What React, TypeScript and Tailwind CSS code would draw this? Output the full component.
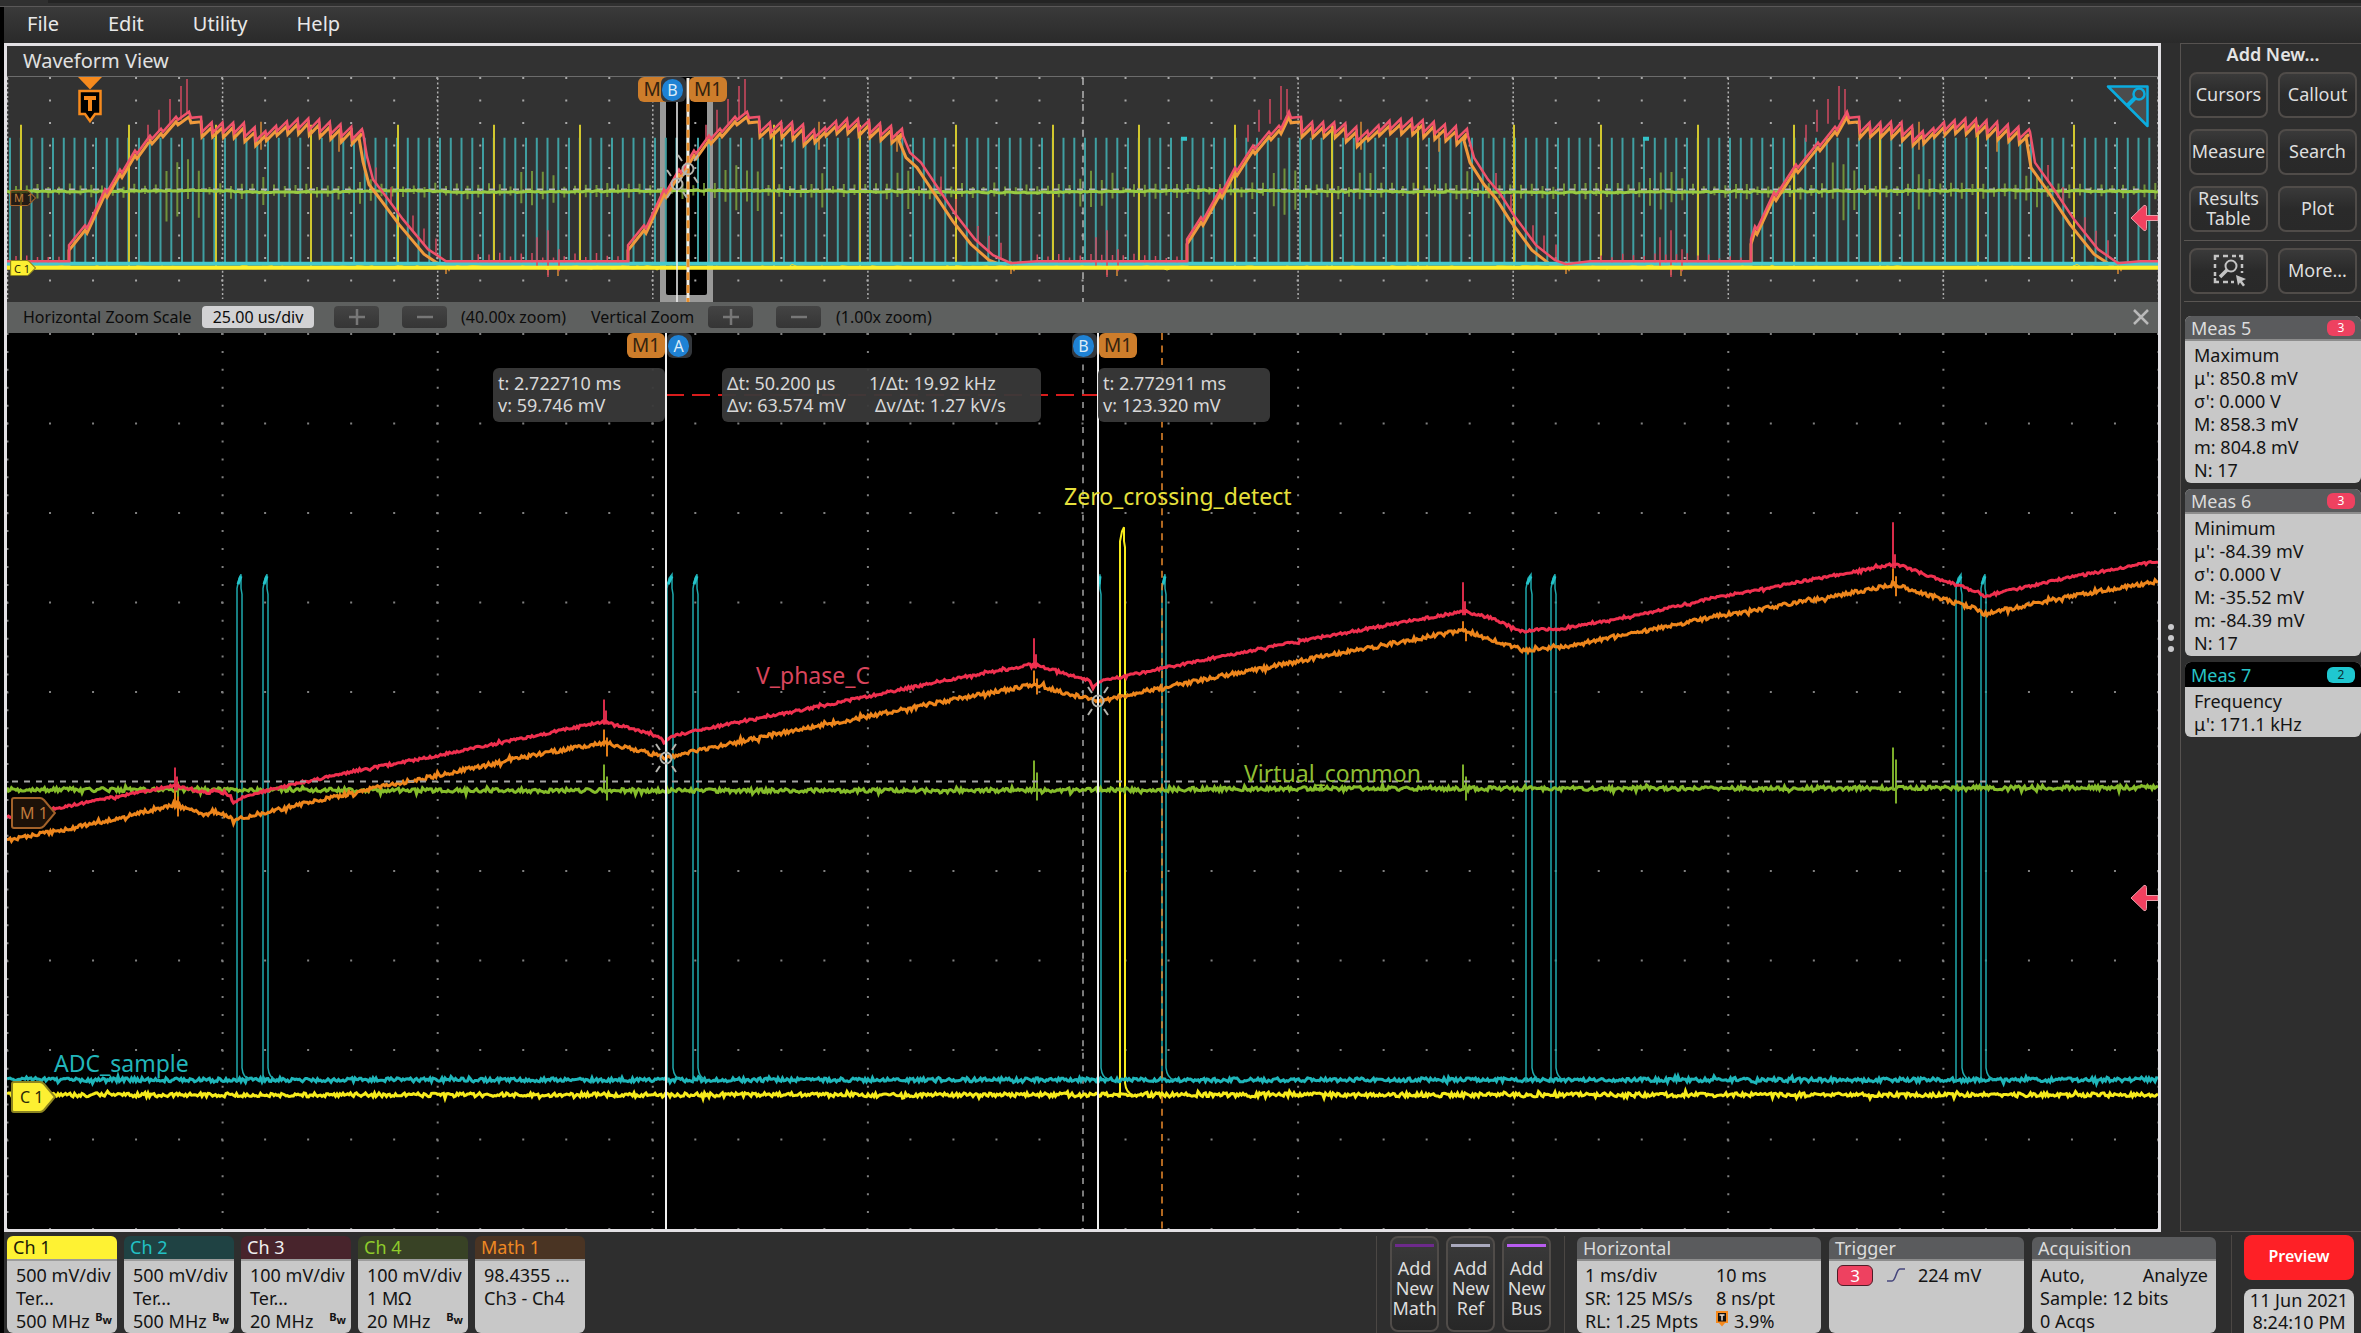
import React from "react";

type Pt = [number, number];

const OV = { x: 7, y: 77, w: 2151, h: 226 };
const DT = { x: 7, y: 333, w: 2151, h: 895 };

function makeRandom(seed: number) {
  let s = seed;
  return () => {
    s = (s * 1664525 + 1013904223) % 4294967296;
    return s / 4294967296;
  };
}

const toPath = (pts: Pt[]) => "M" + pts.map(([x, y]) => `${x.toFixed(1)} ${y.toFixed(1)}`).join("L");

function valueAt(pts: Pt[], x: number) {
  for (let i = 1; i < pts.length; i++) {
    if (x <= pts[i][0]) {
      const [x0, y0] = pts[i - 1];
      const [x1, y1] = pts[i];
      return x1 === x0 ? y1 : y0 + ((y1 - y0) * (x - x0)) / (x1 - x0);
    }
  }
  return pts[pts.length - 1][1];
}

function noisy(pts: Pt[], amp: number, seed: number, step = 1.5) {
  const rnd = makeRandom(seed);
  const out: Pt[] = [];
  for (let x = pts[0][0]; x <= pts[pts.length - 1][0]; x += step) {
    const r = rnd() - 0.5;
    const peak = rnd() > 0.94 ? 2 : 1;
    out.push([x, valueAt(pts, x) + r * amp * peak]);
  }
  return toPath(out);
}

/* ---------- detail traces ---------- */

const RED: Pt[] = [
  [7, 817], [55, 808], [174, 785], [185, 787], [209, 793], [213, 789], [231, 795], [233, 804], [239, 798], [266, 790], [348, 772],
  [438, 755], [527, 737], [605, 721], [662, 737], [664, 743], [669, 737], [696, 730], [780, 714], [950, 679],
  [1034, 664], [1090, 680], [1093, 688], [1097, 682], [1162, 668], [1298, 641], [1414, 620], [1464, 611],
  [1492, 618], [1524, 632], [1535, 629], [1561, 629], [1650, 612], [1716, 597], [1771, 587], [1860, 570],
  [1893, 564], [1902, 566], [1936, 578], [1977, 591], [1984, 596], [2070, 577], [2158, 561],
];
const ORANGE: Pt[] = [
  [7, 840], [100, 822], [174, 804], [185, 808], [209, 815], [212, 810], [231, 817], [234, 822], [239, 818], [348, 793],
  [438, 775], [527, 756], [605, 742], [666, 757], [696, 750], [780, 733], [950, 700], [1034, 684], [1097, 701],
  [1162, 687], [1298, 661], [1414, 639], [1464, 630], [1524, 650], [1535, 648], [1561, 647], [1650, 630],
  [1716, 616], [1771, 607], [1860, 591], [1893, 584], [1977, 609], [1983, 614], [2070, 596], [2158, 581],
];
const GREEN: Pt[] = [[7, 789], [600, 790], [1000, 790], [1300, 788], [1640, 788], [2158, 787]];

const EDGE_SPIKES = [
  { x: 175, r: [767, 790], o: [788, 816], g: [769, 798] },
  { x: 604, r: [699, 724], o: [729, 756], g: [764, 800] },
  { x: 1034, r: [638, 668], o: [670, 694], g: [760, 800] },
  { x: 1463, r: [582, 615], o: [621, 641], g: [764, 800] },
  { x: 1893, r: [522, 568], o: [568, 596], g: [747, 803] },
];

const CYAN_PULSES: Pt[] = [
  [237, 242], [263, 268], [667, 673], [693, 698], [1098, 1101], [1162, 1166],
  [1526, 1532], [1551, 1556], [1956, 1962], [1981, 1986],
];

const pulsePath = (a: number, b: number, top: number, base: number) =>
  `M${a} ${base + 3}V${top + 14}L${a + 2} ${top + 4}L${b - 1} ${top}V${top + 14}L${b} ${top + 20}V${base - 12}Q${b + 1} ${base - 2} ${b + 8} ${base}`;

/* ---------- overview traces ---------- */

interface Cycle {
  start: number;
  peak: number;
  end: number;
  floor: number;
  rise: Pt[];
  fall: Pt[];
}

const RISE: Pt[] = [[0, 246], [16, 226], [36, 190], [51, 170], [66, 151], [81, 136], [92, 129], [107, 117]];

const CYCLES: Cycle[] = [
  { start: 69, peak: 189, end: 363, floor: 446, rise: RISE, fall: [[363, 133], [367, 157], [373, 180], [383, 193], [403, 220], [428, 250], [446, 262]] },
  { start: 628, peak: 747, end: 903, floor: 1011, rise: RISE, fall: [[903, 136], [910, 153], [921, 163], [939, 190], [957, 217], [975, 240], [993, 256], [1011, 264], [1037, 262]] },
  { start: 1187, peak: 1289, end: 1468, floor: 1566, rise: [[0, 240], [14, 218], [33, 190], [48, 168], [66, 146], [82, 132], [92, 126]], fall: [[1468, 136], [1474, 158], [1488, 180], [1500, 194], [1514, 216], [1536, 246], [1555, 261], [1566, 265], [1590, 262]] },
  { start: 1751, peak: 1847, end: 2030, floor: 2118, rise: [[0, 240], [4, 227], [23, 193], [45, 165], [67, 143], [84, 127]], fall: [[2030, 132], [2035, 163], [2052, 187], [2074, 220], [2098, 250], [2118, 264], [2140, 262]] },
];

function overviewTrace(dy: number, dx: number, seed: number): string {
  const rnd = makeRandom(seed);
  const pts: Pt[] = [[7, 262 + dy]];
  for (const c of CYCLES) {
    pts.push([c.start, 262 + dy]);
    c.rise.forEach(([x, y], i) => {
      pts.push([c.start + x, y + dy]);
      if (i > 0 && i < c.rise.length) pts.push([c.start + x + 2, y + dy + 3]);
    });
    pts.push([c.peak, 112 + dy], [c.peak + 2, 118 + dy], [c.peak + 12, 117 + dy]);
    const from = c.peak + 13;
    const count = Math.round((c.end - from) / 10.75);
    const w = (c.end - from) / count;
    for (let i = 0; i < count; i++) {
      const t = i / count;
      const mid = 127 + 9 * Math.exp(-Math.pow((t - 0.33) / 0.08, 2)) - 4 * Math.exp(-Math.pow((t - 0.6) / 0.16, 2)) + 10 * Math.pow(t, 6);
      pts.push([from + i * w, mid + 5 + dy + rnd()], [from + (i + 1) * w - 1, mid - 5 + dy + rnd()]);
    }
    c.fall.forEach(([x, y]) => pts.push([x - dx, Math.min(y + dy, 268)]));
  }
  pts.push([2158, 262 + dy]);
  return toPath(pts);
}

const RED_OVERVIEW = overviewTrace(0, 0, 3);
const ORANGE_OVERVIEW = overviewTrace(5, 4, 5);

const PULSE_STEP = 10.75;
const PULSES = Array.from({ length: 200 }, (_, i) => 10 + i * PULSE_STEP);
const YELLOW_PULSES = [21, 129, 216, 311, 398, 494, 580, 774, 860, 956, 1053, 1139, 1235, 1332, 1418, 1514, 1601, 1698, 1794, 1880, 1978, 2074];

const GREEN_SPIKES = (() => {
  const rnd = makeRandom(11);
  return PULSES.map((p) => {
    const x = p + 6;
    const near = CYCLES.some((c) => Math.abs(x - c.peak + 4) < 20);
    const mid = CYCLES.some((c) => Math.abs(x - c.peak - 76) < 9 || Math.abs(x - c.end) < 9 || Math.abs(x - c.start + 90) < 22);
    const a = near ? 32 : mid ? 20 : 8;
    return `M${x.toFixed(1)} ${(191 - a * (0.4 + rnd() * 0.6)).toFixed(1)}V${(192 + a * (0.2 + rnd() * 0.8)).toFixed(1)}`;
  }).join("");
})();

const RED_SPIKES = (() => {
  const rnd = makeRandom(21);
  let d = "";
  for (const c of CYCLES) {
    [[0, 79, 114], [-6, 86, 120], [-17, 99, 124], [-28, 110, 132], [-39, 125, 142]].forEach(([dx, y0, y1]) => (d += `M${c.peak - 2 + dx} ${y0 + (c.start > 1000 && dx === 0 ? 10 : 0)}V${y1}`));
    for (let x = c.start - 10; x > c.start - 160; x -= PULSE_STEP) if (x > 10) d += `M${x} ${262 - 3 - rnd() * 6}V263`;
    if (c.start > 100) d += `M${c.start - 80} 231V278M${c.start - 91} 238V268M${c.start - 69} 250V272`;
    [10, 22, 33, 70, 55].forEach((k) => (d += `M${c.floor - k} ${valueAt(c.fall, c.floor - k) - 16}v16`));
  }
  return d;
})();

const ORANGE_SPIKES = CYCLES.map((c) => `M${c.floor} 262V275M${c.floor + 3} 264V272M${c.start - 70} 268V277M${c.start - 80} 268V276M${c.peak + 72} 122V150M${c.peak + 150} 132V152`).join("");

/* ---------- small pieces ---------- */

const at = (a: typeof OV, x: number, y: number) => ({
  left: `${((x - a.x) / a.w) * 100}%`,
  top: `${((y - a.y) / a.h) * 100}%`,
});

function Tag({ children }: { children: React.ReactNode }) {
  return <span className="flex h-[25px] w-[38px] items-center justify-center rounded-md bg-[#cd7d2b] text-[19px] leading-none text-[#33220f]">{children}</span>;
}

function Knob({ children }: { children: React.ReactNode }) {
  return (
    <span className="flex h-[25px] w-[25px] items-center rounded-md bg-[#33373c] pl-[1px]">
      <span className="flex h-[22px] w-[21px] items-center justify-center rounded-full bg-[#1f82d4] text-[16px] leading-none text-[#dcecf8]">{children}</span>
    </span>
  );
}

function Star() {
  return (
    <svg width="32" height="32" viewBox="-16 -16 32 32" fill="none" stroke="#b4b4ae" strokeWidth="2" className="block">
      <circle r="5.5" />
      <path d="M-6 -8L-10 -14M6 -8L10 -14M-6 8L-10 14M6 8L10 14" />
    </svg>
  );
}

function Arrow() {
  return (
    <svg width="28" height="28" viewBox="0 0 28 28" className="block">
      <path d="M1 14L14 1.500C15.500 1 16.500 2 16.500 3.500V11.500H28V16.500H16.500V24.500C16.500 26 15.500 27 14 26.500Z" fill="#f1405f" stroke="#e8a0aa" strokeWidth="1" />
    </svg>
  );
}

function Flag({ text, small, filled }: { text: string; small?: boolean; filled?: boolean }) {
  return (
    <span className={small ? "grid h-[16px] w-[26px]" : "grid h-[32px] w-[45px]"}>
      <svg viewBox="0 0 45 32" preserveAspectRatio="none" className="col-start-1 row-start-1 h-full w-full">
        <path d="M3 1H29Q31 1 33 3L44 16L33 29Q31 31 29 31H3Q1 31 1 29V3Q1 1 3 1Z" fill={filled ? "#fdf032" : "#1c1108"} fillOpacity={filled || !small ? 1 : 0.7} stroke={filled ? "#8c8420" : "#a3622a"} strokeWidth="2" />
      </svg>
      <span
        className={`col-start-1 row-start-1 self-center leading-none ${small ? "pl-[4px] text-[11px]" : "pl-[9px] text-[16px]"} ${filled ? "text-[#2b2908]" : "text-[#c07a3c]"}`}
      >
        {text}
      </span>
    </span>
  );
}

function Readout({ lines, className }: { lines: string[][]; className: string }) {
  return (
    <div className={`grid h-[54px] content-center rounded-md bg-[#393939]/95 px-[5px] pb-[3px] text-[18px] leading-[22px] whitespace-pre text-[#d8d8d8] ${className}`}>
      {lines.map((l) => (
        <div key={l[0]} className="flex">
          {l.map((t, i) => (
            <span key={t} className={i === 0 && l.length > 1 ? "w-[142px]" : i === 1 && t.startsWith("Δv") ? "pl-[6px]" : ""}>{t}</span>
          ))}
        </div>
      ))}
    </div>
  );
}

/* ---------- plots ---------- */

const COLS = Array.from({ length: 11 }, (_, i) => i);

function Overview() {
  return (
    <div className="relative h-[226px] overflow-hidden border-t border-[#6c6c6c] bg-[#323232]">
      <svg className="absolute inset-0 h-full w-full" viewBox="7 77 2151 226" preserveAspectRatio="none" fill="none">
        <rect x="660" y="77" width="53" height="226" fill="#999998" />
        <rect x="666" y="77" width="41" height="219" rx="2" fill="#000" />
        {COLS.map((i) => (
          <path key={i} d={`M6 ${78 + i * 22.6}H2158`} stroke="#a8a8a8" strokeWidth="2" strokeDasharray="2 41.02" />
        ))}
        {COLS.filter((i) => i !== 5).map((i) => (
          <path key={i} d={`M${7.5 + i * 215.1} 78V300`} stroke="#b0b0b0" strokeWidth="1.500" strokeDasharray="2 2.500" />
        ))}
        <path d="M1083 78V303" stroke="#b4b4b4" strokeWidth="1.500" strokeDasharray="7 6" />
        <g stroke="#3f9fa1" strokeWidth="2">
          {PULSES.map((x) => (
            <path key={x} d={`M${x.toFixed(1)} 138V264`} />
          ))}
        </g>
        <path d="M1181 139h6M1643 139h6" stroke="#34c3c8" strokeWidth="4" />
        <g stroke="#d2c72e" strokeWidth="2">
          {YELLOW_PULSES.map((x) => (
            <path key={x} d={`M${x} 125V268`} />
          ))}
        </g>
        <path d={GREEN_SPIKES} stroke="#86b13f" strokeWidth="2" opacity="0.75" />
        <path d="M33 190H2144" stroke="#b8b8b8" strokeWidth="2" strokeDasharray="6 6" />
        <path d={noisy([[7, 192], [80, 192], [200, 191], [270, 193], [420, 191], [466, 193], [700, 191], [1020, 193], [1200, 191], [1560, 193], [2000, 191], [2158, 192]], 1.2, 9, 3)} stroke="#98cb42" strokeWidth="3" />
        <path d={ORANGE_SPIKES} stroke="#d98a34" strokeWidth="1.500" />
        <path d={ORANGE_OVERVIEW} stroke="#f09a3c" strokeWidth="3" />
        <path d="M7 264.500H2158" stroke="#45c9cd" strokeWidth="4" />
        <path d={RED_SPIKES} stroke="#d14a60" strokeWidth="1.500" />
        <path d={RED_OVERVIEW} stroke="#f0526b" strokeWidth="2.500" />
        <path d={noisy([[7, 268], [2158, 268]], 3, 4, 5)} stroke="#e8d92b" strokeWidth="1" />
        <path d="M7 268.500H2158" stroke="#fff02a" strokeWidth="4" />
        <path d="M677 100V303" stroke="#f2f2f2" strokeWidth="1.500" />
        <path d="M688 78V303" stroke="#f4efe6" strokeWidth="3" />
        <path d="M688 104V303" stroke="#e98f2c" strokeWidth="3" strokeDasharray="8 5" />
      </svg>

      <div className="absolute" style={at(OV, 638, 77)}><Tag>M&nbsp;&nbsp;</Tag></div>
      <div className="absolute" style={at(OV, 661, 77)}><Knob>B</Knob></div>
      <div className="absolute" style={at(OV, 689, 77)}><Tag>M1</Tag></div>
      <div className="absolute -translate-x-1/2 -translate-y-1/2" style={at(OV, 677, 184)}><Star /></div>
      <div className="absolute -translate-x-1/2 -translate-y-1/2" style={at(OV, 688, 169)}><Star /></div>
      <div className="absolute" style={at(OV, 78, 77)}>
        <svg width="25" height="47" viewBox="0 0 25 47" className="block">
          <path d="M0 0H24L12 12.500Z" fill="#f78a1d" />
          <path d="M1.500 14H22.500V37H17L12 44L7 37H1.500Z" fill="#000" stroke="#f78a1d" strokeWidth="2.500" />
          <path d="M6 19H18V23H14V34H10V23H6Z" fill="#f78a1d" />
        </svg>
      </div>
      <div className="absolute" style={at(OV, 10, 190)}><Flag text="M 1" small /></div>
      <div className="absolute" style={at(OV, 10, 261)}><Flag text="C 1" small filled /></div>
      <div className="absolute right-0 -translate-y-1/2" style={{ top: at(OV, 0, 219).top }}><Arrow /></div>
      <button aria-label="Zoom" className="absolute top-[7px] right-[8px]">
        <svg width="44" height="44" viewBox="0 0 44 44" fill="none" stroke="#0bacdf" className="block">
          <path d="M2 2.500H41.500V42Z" fill="#4b4c4d" strokeWidth="2.500" strokeLinejoin="round" />
          <circle cx="33" cy="10" r="5.500" strokeWidth="2.500" />
          <path d="M29 14L21 22" strokeWidth="4" />
        </svg>
      </button>
    </div>
  );
}

function Detail() {
  return (
    <div className="relative min-h-[500px] flex-1 overflow-hidden bg-black">
      <svg className="absolute inset-0 h-full w-full" viewBox="7 333 2151 895" preserveAspectRatio="none" fill="none">
        {COLS.filter((i) => i !== 5).map((i) => (
          <path key={i} d={`M6 ${334 + i * 89.4}H2158`} stroke="#808080" strokeWidth="2" strokeDasharray="2 41.02" />
        ))}
        {COLS.filter((i) => i !== 5).map((i) => (
          <path key={i} d={`M${7.5 + i * 215.1} 333V1228`} stroke="#808080" strokeWidth="2" strokeDasharray="2 15.900" />
        ))}
        <path d="M1083 352V1228" stroke="#a4a4a4" strokeWidth="1.500" strokeDasharray="6 6.500" />
        <path d="M666 395H1097" stroke="#d81c1c" strokeWidth="2" strokeDasharray="18 8" />

        <path d={noisy([[7, 1094], [2158, 1094]], 4, 31)} stroke="#f6ea1c" strokeWidth="3" />
        <path d={pulsePath(1120, 1125, 527, 1094)} stroke="#f6ea1c" strokeWidth="2" />
        <path d={noisy([[7, 1079], [2158, 1079]], 4, 37)} stroke="#1fb6ba" strokeWidth="3" />
        <g stroke="#1fa9ad" strokeWidth="1.500">
          {CYAN_PULSES.map(([a, b]) => (
            <path key={a} d={pulsePath(a, b, 574, 1079)} />
          ))}
          {CYAN_PULSES.map(([a, b]) => (
            <path key={a} d={`M${a + 1} 584L${b - 1} 576`} stroke="#24c4ca" strokeWidth="3" />
          ))}
        </g>
        <path d={noisy(GREEN, 4, 41)} stroke="#86bd2b" strokeWidth="3" />
        {EDGE_SPIKES.map((s) => (
          <g key={s.x} strokeWidth="2">
            <path d={`M${s.x} ${s.g[0]}V790M${s.x + 3} ${s.g[0] + 12}V${s.g[1]}`} stroke="#7cae2a" />
            <path d={`M${s.x} ${s.o[0]}V${s.o[1] - 10}M${s.x + 3} ${s.o[0] + 8}V${s.o[1]}`} stroke="#e07c18" />
            <path d={`M${s.x} ${s.r[0]}V${s.r[1]}M${s.x + 2} ${s.r[1] - 14}V${s.r[1]}`} stroke="#d92b49" />
          </g>
        ))}
        <path d={noisy(ORANGE, 4, 43)} stroke="#ee861c" strokeWidth="3" />
        <path d={noisy(RED, 2.5, 47)} stroke="#f0304f" strokeWidth="3" />
        <path d="M12 781H2144" stroke="#a4a4a4" strokeWidth="2" strokeDasharray="6 6" />
        <path d="M1162 333V1228" stroke="#ec8a2b" strokeWidth="1.500" strokeDasharray="7 5.500" />
        <path d="M666 333V1228" stroke="#f0f0f0" strokeWidth="2" />
        <path d="M1098 333V1228" stroke="#f0f0f0" strokeWidth="2" />
      </svg>

      <div className="absolute" style={at(DT, 627, 333)}><Tag>M1</Tag></div>
      <div className="absolute" style={at(DT, 667, 333)}><Knob>A</Knob></div>
      <div className="absolute" style={at(DT, 1072, 333)}><Knob>B</Knob></div>
      <div className="absolute" style={at(DT, 1099, 333)}><Tag>M1</Tag></div>
      <div className="absolute" style={at(DT, 493, 368)}><Readout className="w-[172px]" lines={[["t: 2.722710 ms"], ["v: 59.746 mV"]]} /></div>
      <div className="absolute" style={at(DT, 722, 368)}>
        <Readout className="w-[319px]" lines={[["Δt: 50.200 μs", "1/Δt: 19.92 kHz"], ["Δv: 63.574 mV", "Δv/Δt: 1.27 kV/s"]]} />
      </div>
      <div className="absolute" style={at(DT, 1098, 368)}><Readout className="w-[172px]" lines={[["t: 2.772911 ms"], ["v: 123.320 mV"]]} /></div>

      <div className="absolute text-[23px] leading-[32px] text-[#e6e03c]" style={at(DT, 1064, 480)}>Zero_crossing_detect</div>
      <div className="absolute text-[23px] leading-[32px] text-[#d9455c]" style={at(DT, 756, 659)}>V_phase_C</div>
      <div className="absolute text-[23px] leading-[32px] text-[#8fbf33]" style={at(DT, 1244, 757)}>Virtual_common</div>
      <div className="absolute text-[23px] leading-[32px] text-[#22b5ba]" style={at(DT, 54, 1046)}>ADC_sample</div>

      <div className="absolute -translate-x-1/2 -translate-y-1/2" style={at(DT, 666, 758)}><Star /></div>
      <div className="absolute -translate-x-1/2 -translate-y-1/2" style={at(DT, 1098, 701)}><Star /></div>
      <div className="absolute" style={at(DT, 11, 796)}><Flag text="M 1" /></div>
      <div className="absolute" style={at(DT, 11, 1080)}><Flag text="C 1" filled /></div>
      <div className="absolute right-0 -translate-y-1/2" style={{ top: at(DT, 0, 897).top }}><Arrow /></div>
    </div>
  );
}

function Step({ label, plus }: { label: string; plus?: boolean }) {
  return (
    <button aria-label={label} className="flex h-[22px] w-[45px] items-center justify-center rounded bg-gradient-to-b from-[#444] to-[#353535]">
      <svg width="16" height="16" viewBox="0 0 16 16" stroke="#777" strokeWidth="2.500">
        <path d={plus ? "M0 8H16M8 0V16" : "M0 8H16"} />
      </svg>
    </button>
  );
}

function ZoomBar() {
  return (
    <div className="flex h-[31px] items-center bg-[#5e605f] pr-[9px] pb-[2px] pl-4 text-[16px] leading-none text-[#0c0c0c]">
      <label htmlFor="hscale" className="w-[179px]">Horizontal Zoom Scale</label>
      <input id="hscale" defaultValue="25.00 us/div" className="h-[22px] w-[112px] rounded-sm bg-[#d2d2d4] text-center" />
      <div className="ml-5 flex gap-[23px]">
        <Step label="Increase horizontal zoom" plus />
        <Step label="Decrease horizontal zoom" />
      </div>
      <span className="ml-[14px] w-[130px]">(40.00x zoom)</span>
      <span className="w-[117px]">Vertical Zoom</span>
      <div className="flex gap-[23px]">
        <Step label="Increase vertical zoom" plus />
        <Step label="Decrease vertical zoom" />
      </div>
      <span className="ml-[15px]">(1.00x zoom)</span>
      <button aria-label="Close zoom" className="ml-auto">
        <svg width="16" height="16" viewBox="0 0 16 16" stroke="#b9b9b9" strokeWidth="2.500" className="block">
          <path d="M1 1L15 15M15 1L1 15" />
        </svg>
      </button>
    </div>
  );
}

/* ---------- side bar ---------- */

const sideButton =
  "flex h-[46px] items-center justify-center rounded-lg border-2 border-[#504c49] bg-gradient-to-b from-[#3a3a3a] via-[#2a2a2a] to-[#292929] pb-[2px] text-center text-[18px] leading-[20px] text-[#dedede]";

function Meas({ title, badge, rows, accent }: { title: string; badge: string; rows: string[]; accent?: boolean }) {
  return (
    <section className="rounded-md bg-[#c8c8c8]">
      <h3 className={`flex h-[25px] items-center justify-between rounded-t-md px-[6px] text-[18px] leading-[22px] ${accent ? "bg-black text-[#27c3c6]" : "border-b-2 border-[#8d8d8d] bg-[#5a5b5d] text-[#dcdcdc]"}`}>
        <span>{title}</span>
        <span className={`flex h-[16px] w-[28px] items-center justify-center rounded-md text-[12px] leading-none ${accent ? "bg-[#1fc7d0] text-[#0c3335]" : "bg-[#ee4160] text-white"}`}>{badge}</span>
      </h3>
      <div className="pt-[3px] pb-[1px] pl-[9px] text-[18px] leading-[23px] text-[#141414]">
        {rows.map((r) => (
          <div key={r}>{r}</div>
        ))}
      </div>
    </section>
  );
}

function SideBar() {
  return (
    <aside className="w-[181px] border-t border-b border-l border-[#565250] bg-[#2e2e2e]">
      <h2 className="h-[28px] pl-1 text-center text-[18px] leading-[21px] font-semibold text-[#e4e4e4]">Add New...</h2>
      <div className="grid grid-cols-2 gap-x-[10px] gap-y-[11px] pr-[4px] pb-2 pl-[8px]">
        {["Cursors", "Callout", "Measure", "Search", "Results Table", "Plot"].map((t) => (
          <button key={t} className={sideButton}>{t}</button>
        ))}
      </div>
      <div className="ml-[3px] grid grid-cols-2 gap-x-[10px] border-y border-[#5a5653] py-[7px] pr-[4px] pl-[5px]">
        <button aria-label="Zoom select" className={sideButton}>
          <svg width="34" height="34" viewBox="0 0 34 34" fill="none" stroke="#c4c4c4" className="block">
            <path d="M3 7V3H7M11 3H16M20 3H24M27 3H30V7M30 11V15M3 11V15M3 19V23M3 25V29H7M11 29H16M19 29H22M30 18V20" strokeWidth="2.500" />
            <circle cx="19" cy="13" r="5.500" strokeWidth="2" />
            <path d="M15 17L8 24" strokeWidth="3.500" />
            <path d="M24 22L34 26L30 28L33 32L31 33.500L28 29.500L26 32.500Z" fill="#c4c4c4" stroke="none" />
          </svg>
        </button>
        <button className={sideButton}>More...</button>
      </div>
      <div className="mt-[14px] ml-[4px] flex flex-col gap-[6px]">
        <Meas title="Meas 5" badge="3" rows={["Maximum", "μ': 850.8 mV", "σ': 0.000 V", "M: 858.3 mV", "m: 804.8 mV", "N: 17"]} />
        <Meas title="Meas 6" badge="3" rows={["Minimum", "μ': -84.39 mV", "σ': 0.000 V", "M: -35.52 mV", "m: -84.39 mV", "N: 17"]} />
        <Meas title="Meas 7" badge="2" accent rows={["Frequency", "μ': 171.1 kHz"]} />
      </div>
    </aside>
  );
}

/* ---------- bottom bar ---------- */

const CHANNELS = [
  { name: "Ch 1", head: "bg-[#fef233] text-[#1c1b08]", rows: ["500 mV/div", "Ter...", "500 MHz"], bw: true },
  { name: "Ch 2", head: "bg-[#1f4243] text-[#22c0c4]", rows: ["500 mV/div", "Ter...", "500 MHz"], bw: true },
  { name: "Ch 3", head: "bg-[#48242c] text-[#f0f0f0]", rows: ["100 mV/div", "Ter...", "20 MHz"], bw: true },
  { name: "Ch 4", head: "bg-[#384225] text-[#8ecb2b]", rows: ["100 mV/div", "1 MΩ", "20 MHz"], bw: true },
  { name: "Math 1", head: "bg-[#4a3423] text-[#ee8823]", rows: ["98.4355 ...", "Ch3 - Ch4"], bw: false },
];

const body = "flex-1 bg-[#c8c8c8] text-[18px] leading-[23px] text-[#141414]";
const cardHead = "h-[24px] rounded-t-md border-b-2 border-[#8d8d8d] bg-[#5a5b5d] px-[6px] text-[18px] leading-[22px] text-[#dcdcdc]";

function BottomBar() {
  return (
    <footer className="flex h-[101px] bg-[#2e2e2e] pr-[7px]">
      <div className="flex gap-[7px] pt-[4px] pl-[3px]">
        {CHANNELS.map((c) => (
          <section key={c.name} className="flex w-[110px] flex-col">
            <h3 className={`h-[25px] rounded-t-md border-b-2 border-[#9c9c9c] px-[6px] text-[18px] leading-[22px] ${c.head}`}>{c.name}</h3>
            <div className={`${body} rounded-b-md pt-[3px] pl-[9px] whitespace-nowrap`}>
              {c.rows.map((r, i) => (
                <div key={r} className="flex justify-between pr-[5px]">
                  <span>{r}</span>
                  {i === 2 && c.bw && (
                    <span className="text-[11px] leading-[14px] font-bold">
                      B<sub className="text-[11px]">w</sub>
                    </span>
                  )}
                </div>
              ))}
            </div>
          </section>
        ))}
      </div>

      <div className="ml-auto flex">
        <div className="mt-[4px] flex gap-[7px] border-x border-[#4b4744] px-[13px]">
          {[
            ["Math", "border-[#6d2a8c]"],
            ["Ref", "border-[#a9a9bd]"],
            ["Bus", "border-[#b85cf0]"],
          ].map(([t, c]) => (
            <button key={t} className="mb-[1px] flex w-[49px] flex-col items-center rounded-lg border-2 border-[#504c49] bg-gradient-to-b from-[#3a3a3a] to-[#272727] pt-[6px] text-[18px] leading-[20px] text-[#dedede]">
              <span className={`mb-[11px] w-[39px] border-t-[3px] ${c}`} />
              <span>Add</span>
              <span>New</span>
              <span>{t}</span>
            </button>
          ))}
        </div>
        <div className="flex gap-[8px] pt-[5px] pr-[15px] pl-[12px]">
          <section className="flex w-[244px] flex-col">
            <h3 className={cardHead}>Horizontal</h3>
            <div className={`${body} grid grid-cols-[131px_1fr] content-start rounded-b-md pt-[3px] pl-[8px]`}>
              <span>1 ms/div</span><span>10 ms</span>
              <span>SR: 125 MS/s</span><span>8 ns/pt</span>
              <span>RL: 1.25 Mpts</span>
              <span className="flex gap-[6px]">
                <svg width="12" height="16" viewBox="0 0 12 16" className="mt-[1px] block">
                  <path d="M0 0H12V12H9L6 15.500L3 12H0Z" fill="#f78a1d" />
                  <path d="M2 2H10V10.500H2Z" fill="#111" />
                  <path d="M3.500 4H8.500M6 4V9.500" stroke="#f0e0d0" strokeWidth="1.500" />
                </svg>
                3.9%
              </span>
            </div>
          </section>
          <section className="flex w-[195px] flex-col">
            <h3 className={cardHead}>Trigger</h3>
            <div className={`${body} flex items-start rounded-b-md pt-[4px] pl-[8px]`}>
              <span className="flex h-[21px] w-[36px] items-center justify-center rounded-md border border-[#4e1c27] bg-[#ee4160] text-[17px] leading-none text-white">3</span>
              <svg width="20" height="20" viewBox="0 -2 20 20" fill="none" stroke="#45457c" strokeWidth="1.500" className="mr-[12px] ml-[13px] block">
                <path d="M1 14H6C10 14 10 2 14 2H19" />
              </svg>
              <span className="leading-[21px]">224 mV</span>
            </div>
          </section>
          <section className="flex w-[184px] flex-col">
            <h3 className={cardHead}>Acquisition</h3>
            <div className={`${body} rounded-b-md px-[8px] pt-[3px]`}>
              <div className="flex justify-between"><span>Auto,</span><span>Analyze</span></div>
              <div>Sample: 12 bits</div>
              <div>0 Acqs</div>
            </div>
          </section>
        </div>
        <div className="mt-[3px] flex flex-col gap-[9px] border-l border-[#4b4744] pl-[12px]">
          <button className="h-[45px] w-[110px] rounded-lg bg-[#fe2026] pb-[4px] text-[16px] font-semibold text-white">Preview</button>
          <div className="flex-1 rounded-t-lg bg-[#cdcdcd] text-center text-[18px] leading-[22px] whitespace-nowrap text-[#141414]">
            11 Jun 2021<br />8:24:10 PM
          </div>
        </div>
      </div>
    </footer>
  );
}

export default function App() {
  return (
    <div className="flex min-h-screen flex-col bg-[#2e2e2e] font-['Noto_Sans','Open_Sans',sans-serif]">
      <div className="h-[7px] border-b border-[#5a5858] bg-[#303030]">
        <div className="ml-12 h-[3px] bg-[#242424]" />
      </div>
      <div className="flex flex-1 flex-col border-l-4 border-black">
        <nav className="flex h-[36px] items-center gap-[49px] bg-gradient-to-b from-[#3a3a3a] to-[#2a2a2a] pb-[2px] pl-[23px] text-[20px] leading-none text-[#e8e8e8]">
          {["File", "Edit", "Utility", "Help"].map((t) => (
            <button key={t}>{t}</button>
          ))}
        </nav>
        <main className="flex flex-1">
          <section className="flex min-w-0 flex-1 flex-col border-[3px] border-[#e2e0e4] bg-[#323232]">
            <h1 className="h-[30px] pl-4 text-[20px] leading-[30px] text-[#e0e0e0]">Waveform View</h1>
            <Overview />
            <ZoomBar />
            <Detail />
          </section>
          <div className="flex w-[19px] flex-col items-center justify-center gap-[5px]">
            <span className="h-[6px] w-[6px] rounded-full bg-[#c9c9cc]" />
            <span className="h-[6px] w-[6px] rounded-full bg-[#c9c9cc]" />
            <span className="h-[6px] w-[6px] rounded-full bg-[#c9c9cc]" />
          </div>
          <SideBar />
        </main>
        <BottomBar />
      </div>
    </div>
  );
}
